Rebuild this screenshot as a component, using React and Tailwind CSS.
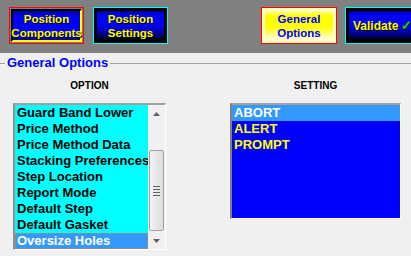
import React from "react";

const OPTIONS = [
  "Guard Band Lower",
  "Price Method",
  "Price Method Data",
  "Stacking Preferences",
  "Step Location",
  "Report Mode",
  "Default Step",
  "Default Gasket",
  "Oversize Holes",
];

const SETTINGS = ["ABORT", "ALERT", "PROMPT"];

function Tri({ down }) {
  return (
    <svg width="7" height="4" viewBox="0 0 7 4">
      {down ? (
        <polygon points="0,0 7,0 3.5,4" fill="#606060" />
      ) : (
        <polygon points="0,4 7,4 3.5,0" fill="#606060" />
      )}
    </svg>
  );
}

export default function App() {
  return (
    <div className="w-[411px] h-[256px] overflow-hidden bg-[#f0f0f0] font-['Liberation_Sans',Arial,sans-serif]">
      {/* Toolbar */}
      <div className="h-[53px] bg-[#808080] flex items-start pt-[7px] overflow-hidden">
        {/* Position Components */}
        <div className="ml-[9px] w-[75px] h-[37px] shrink-0 border border-[#ff0000] p-[1px] bg-[#808080]">
          <div className="w-full h-full border-2 border-black border-r-[#ffff00] border-b-[#ffff00]">
            <div className="w-full h-full bg-[linear-gradient(to_bottom,#000090_0px,#0000ff_5px,#0000ff_24px,#000090_30px)] flex flex-col items-center justify-center text-[#ffff00] font-bold text-[11.5px] leading-[14px] [text-shadow:1px_1px_0_#000]">
              <span>Position</span>
              <span>Components</span>
            </div>
          </div>
        </div>
        {/* Position Settings */}
        <div className="ml-[9px] w-[75px] h-[37px] shrink-0 border border-[#00ffff] bg-black p-[3px]">
          <div className="w-full h-full bg-[linear-gradient(to_bottom,#000090_0px,#0000ff_4px,#0000ff_14px,#000080_24px,#000000_29px)] flex flex-col items-center justify-center text-[#ffff00] font-bold text-[11.5px] leading-[14px] [text-shadow:1px_1px_0_#000]">
            <span>Position</span>
            <span>Settings</span>
          </div>
        </div>
        {/* General Options */}
        <div className="ml-[93px] w-[76px] h-[37px] shrink-0 border border-[#ff0000] bg-[#ffffc0] p-[3px]">
          <div className="w-full h-full bg-[linear-gradient(to_bottom,#ffffa0_0px,#ffff00_5px,#ffff00_16px,#ffffa0_25px,#ffffe0_29px)] flex flex-col items-center justify-center text-[#0000ff] font-bold text-[11.5px] leading-[14px]">
            <span>General</span>
            <span>Options</span>
          </div>
        </div>
        {/* Validate */}
        <div className="ml-[8px] w-[75px] h-[37px] shrink-0 border border-[#00ffff] bg-black p-[3px]">
          <div className="w-full h-full bg-[linear-gradient(to_bottom,#000090_0px,#0000ff_4px,#0000ff_14px,#000080_24px,#000000_29px)] flex items-center pl-[4px] text-[#ffff00] font-bold text-[12px] leading-[14px] [text-shadow:1px_1px_0_#000] whitespace-nowrap">
            <span>Validate</span>
            <span className="ml-[3px] text-[#00e000] text-[13px]">✓</span>
          </div>
        </div>
      </div>

      {/* Group legend */}
      <div className="mt-[3px] h-[14px] flex items-center">
        <div className="w-[5px] h-px bg-[#a0a0a0]" />
        <span className="px-[2px] text-[13px] leading-[14px] font-bold text-[#0000ff] whitespace-nowrap">
          General Options
        </span>
        <div className="flex-1 h-px bg-[#a0a0a0]" />
      </div>

      {/* Columns */}
      <div className="flex items-start ml-[13px] gap-[64px] mt-[10px]">
        {/* Option column */}
        <div className="flex flex-col items-center w-[153px]">
          <div className="h-[12px] leading-[12px] text-[10px] font-bold text-black">OPTION</div>
          <div className="mt-[11px] w-[153px] h-[147px] border-t-2 border-l-2 border-t-[#a0a0a0] border-l-[#909090] border-r border-b border-r-white border-b-white flex">
            <div className="flex-1 bg-[#00ffff] overflow-hidden">
              {OPTIONS.map((o, i) => {
                const sel = i === OPTIONS.length - 1;
                return (
                  <div
                    key={o}
                    className={
                      sel
                        ? "h-[16px] leading-[16px] pl-[2px] text-[13px] font-bold whitespace-nowrap bg-[#3399ff] text-white outline-1 outline-dotted outline-[#e08020] -outline-offset-1"
                        : "h-[16px] leading-[16px] pl-[2px] text-[13px] font-bold whitespace-nowrap text-black"
                    }
                  >
                    {o}
                  </div>
                );
              })}
            </div>
            <div className="w-[17px] bg-[#f0f0f0] flex flex-col">
              <div className="h-[17px] flex items-center justify-center">
                <Tri />
              </div>
              <div className="flex-1">
                <div className="mt-[28px] mx-[1px] h-[81px] border border-[#a0a0a0] rounded-[2px] bg-[linear-gradient(to_right,#f4f4f4,#dcdcdc)] flex flex-col items-center justify-center gap-[2px]">
                  <div className="w-[7px] h-px bg-[#606060]" />
                  <div className="w-[7px] h-px bg-[#606060]" />
                  <div className="w-[7px] h-px bg-[#606060]" />
                  <div className="w-[7px] h-px bg-[#606060]" />
                </div>
              </div>
              <div className="h-[17px] flex items-center justify-center">
                <Tri down />
              </div>
            </div>
          </div>
        </div>

        {/* Setting column */}
        <div className="flex flex-col items-center w-[171px]">
          <div className="h-[12px] leading-[12px] text-[10px] font-bold text-black">SETTING</div>
          <div className="mt-[11px] w-[171px] h-[116px] border-t-2 border-l-2 border-t-[#a0a0a0] border-l-[#808080] border-r border-b border-r-white border-b-white bg-[#0000ff]">
            {SETTINGS.map((s, i) => (
              <div
                key={s}
                className={
                  i === 0
                    ? "h-[16px] leading-[16px] pl-[2px] text-[13px] font-bold bg-[#3399ff] text-white"
                    : "h-[16px] leading-[16px] pl-[2px] text-[13px] font-bold text-[#ffff00]"
                }
              >
                {s}
              </div>
            ))}
          </div>
        </div>
      </div>
    </div>
  );
}
